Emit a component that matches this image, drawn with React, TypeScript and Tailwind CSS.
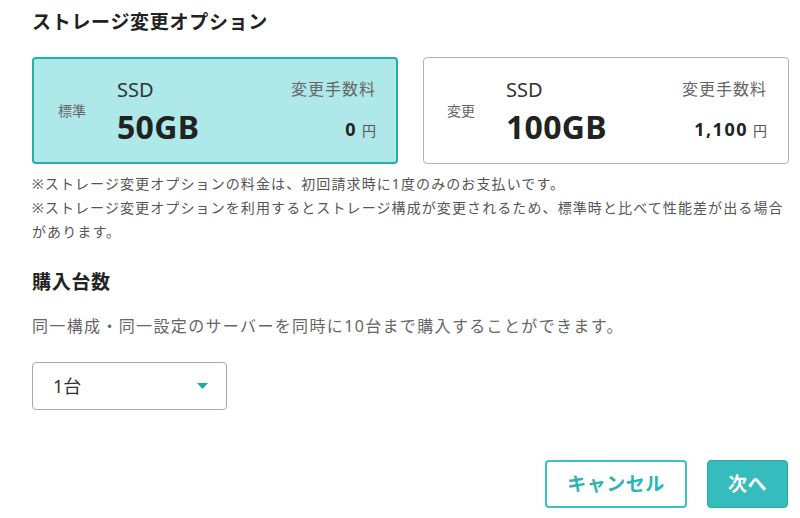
import React from "react";

type Plan = {
  label: string;
  size: string;
  fee: string;
  selected: boolean;
};

const plans: Plan[] = [
  { label: "標準", size: "50GB", fee: "0", selected: true },
  { label: "変更", size: "100GB", fee: "1,100", selected: false },
];

const font = {
  fontFamily: '"Noto Sans", "Noto Sans CJK JP", sans-serif',
};

const PlanCard = ({ plan }: { plan: Plan }) => {
  return (
    <div
      className={
        plan.selected
          ? "h-[107px] flex items-center rounded-[4px] border-2 border-[#22b0ab] bg-[#aee8e8] pl-[24px] pr-[20px]"
          : "h-[107px] flex items-center rounded-[4px] border border-[#b4b4b4] bg-white pl-[23px] pr-[21px]"
      }
    >
      <div className="w-[59px] text-[14px] leading-[20px] text-[#666]">
        {plan.label}
      </div>
      <div className="flex-1 flex flex-col gap-[7px]">
        <div className="flex items-center justify-between">
          <span className="mt-[2px] text-[20px] leading-[24px] text-[#333]">SSD</span>
          <span className="text-[16px] leading-[24px] tracking-[1px] text-[#666]">
            変更手数料
          </span>
        </div>
        <div className="flex items-center justify-between">
          <span className="text-[32px] leading-[36px] font-bold tracking-[0.3px] text-[#222]">
            {plan.size}
          </span>
          <span className="mt-[4px] flex items-baseline gap-[5px]">
            <span className="text-[18px] font-bold tracking-[1.5px] text-[#222]">
              {plan.fee}
            </span>
            <span className="text-[14px] text-[#555]">円</span>
          </span>
        </div>
      </div>
    </div>
  );
};

const App = () => {
  return (
    <div className="w-[800px] h-[518px] bg-white pl-8 pt-2" style={font}>
      <h2 className="text-[19px] leading-[28px] font-bold tracking-[0.7px] text-[#222]">
        ストレージ変更オプション
      </h2>

      <div className="mt-[21px] w-[757px] grid grid-cols-2 gap-[25px]">
        {plans.map((p) => (
          <PlanCard key={p.label} plan={p} />
        ))}
      </div>

      <div className="mt-2 w-[757px] text-[14px] leading-[24px] tracking-[1.1px] text-[#555]">
        <p>※ストレージ変更オプションの料金は、初回請求時に1度のみのお支払いです。</p>
        <p>
          ※ストレージ変更オプションを利用するとストレージ構成が変更されるため、標準時と比べて性能差が出る場合があります。
        </p>
      </div>

      <h2 className="mt-6 text-[19px] leading-[28px] font-bold tracking-[0.7px] text-[#222]">
        購入台数
      </h2>
      <p className="mt-[18px] text-[16px] leading-[24px] tracking-[1.35px] text-[#666]">
        同一構成・同一設定のサーバーを同時に10台まで購入することができます。
      </p>

      <div className="mt-6 w-[195px] h-[48px] flex items-center justify-between rounded-[4px] border border-[#aaa] pl-[20px] pr-[18px]">
        <span className="text-[18px] text-[#333]">1台</span>
        <svg width="11" height="6" viewBox="0 0 11 6">
          <path d="M0 0h11L5.5 6z" fill="#1aa9a4" />
        </svg>
      </div>

      <div className="mt-[50px] w-[756px] flex justify-end gap-5">
        <button className="w-[142px] h-[48px] rounded-[4px] border-2 border-[#3fc0c0] bg-white text-[19px] font-bold tracking-[0.5px] text-[#2fb3b3]">
          キャンセル
        </button>
        <button className="w-[81px] h-[48px] rounded-[4px] border border-[#2aa9a9] bg-[#36bcbc] text-[19px] font-bold tracking-[0.5px] text-white">
          次へ
        </button>
      </div>
    </div>
  );
};

export default App;
